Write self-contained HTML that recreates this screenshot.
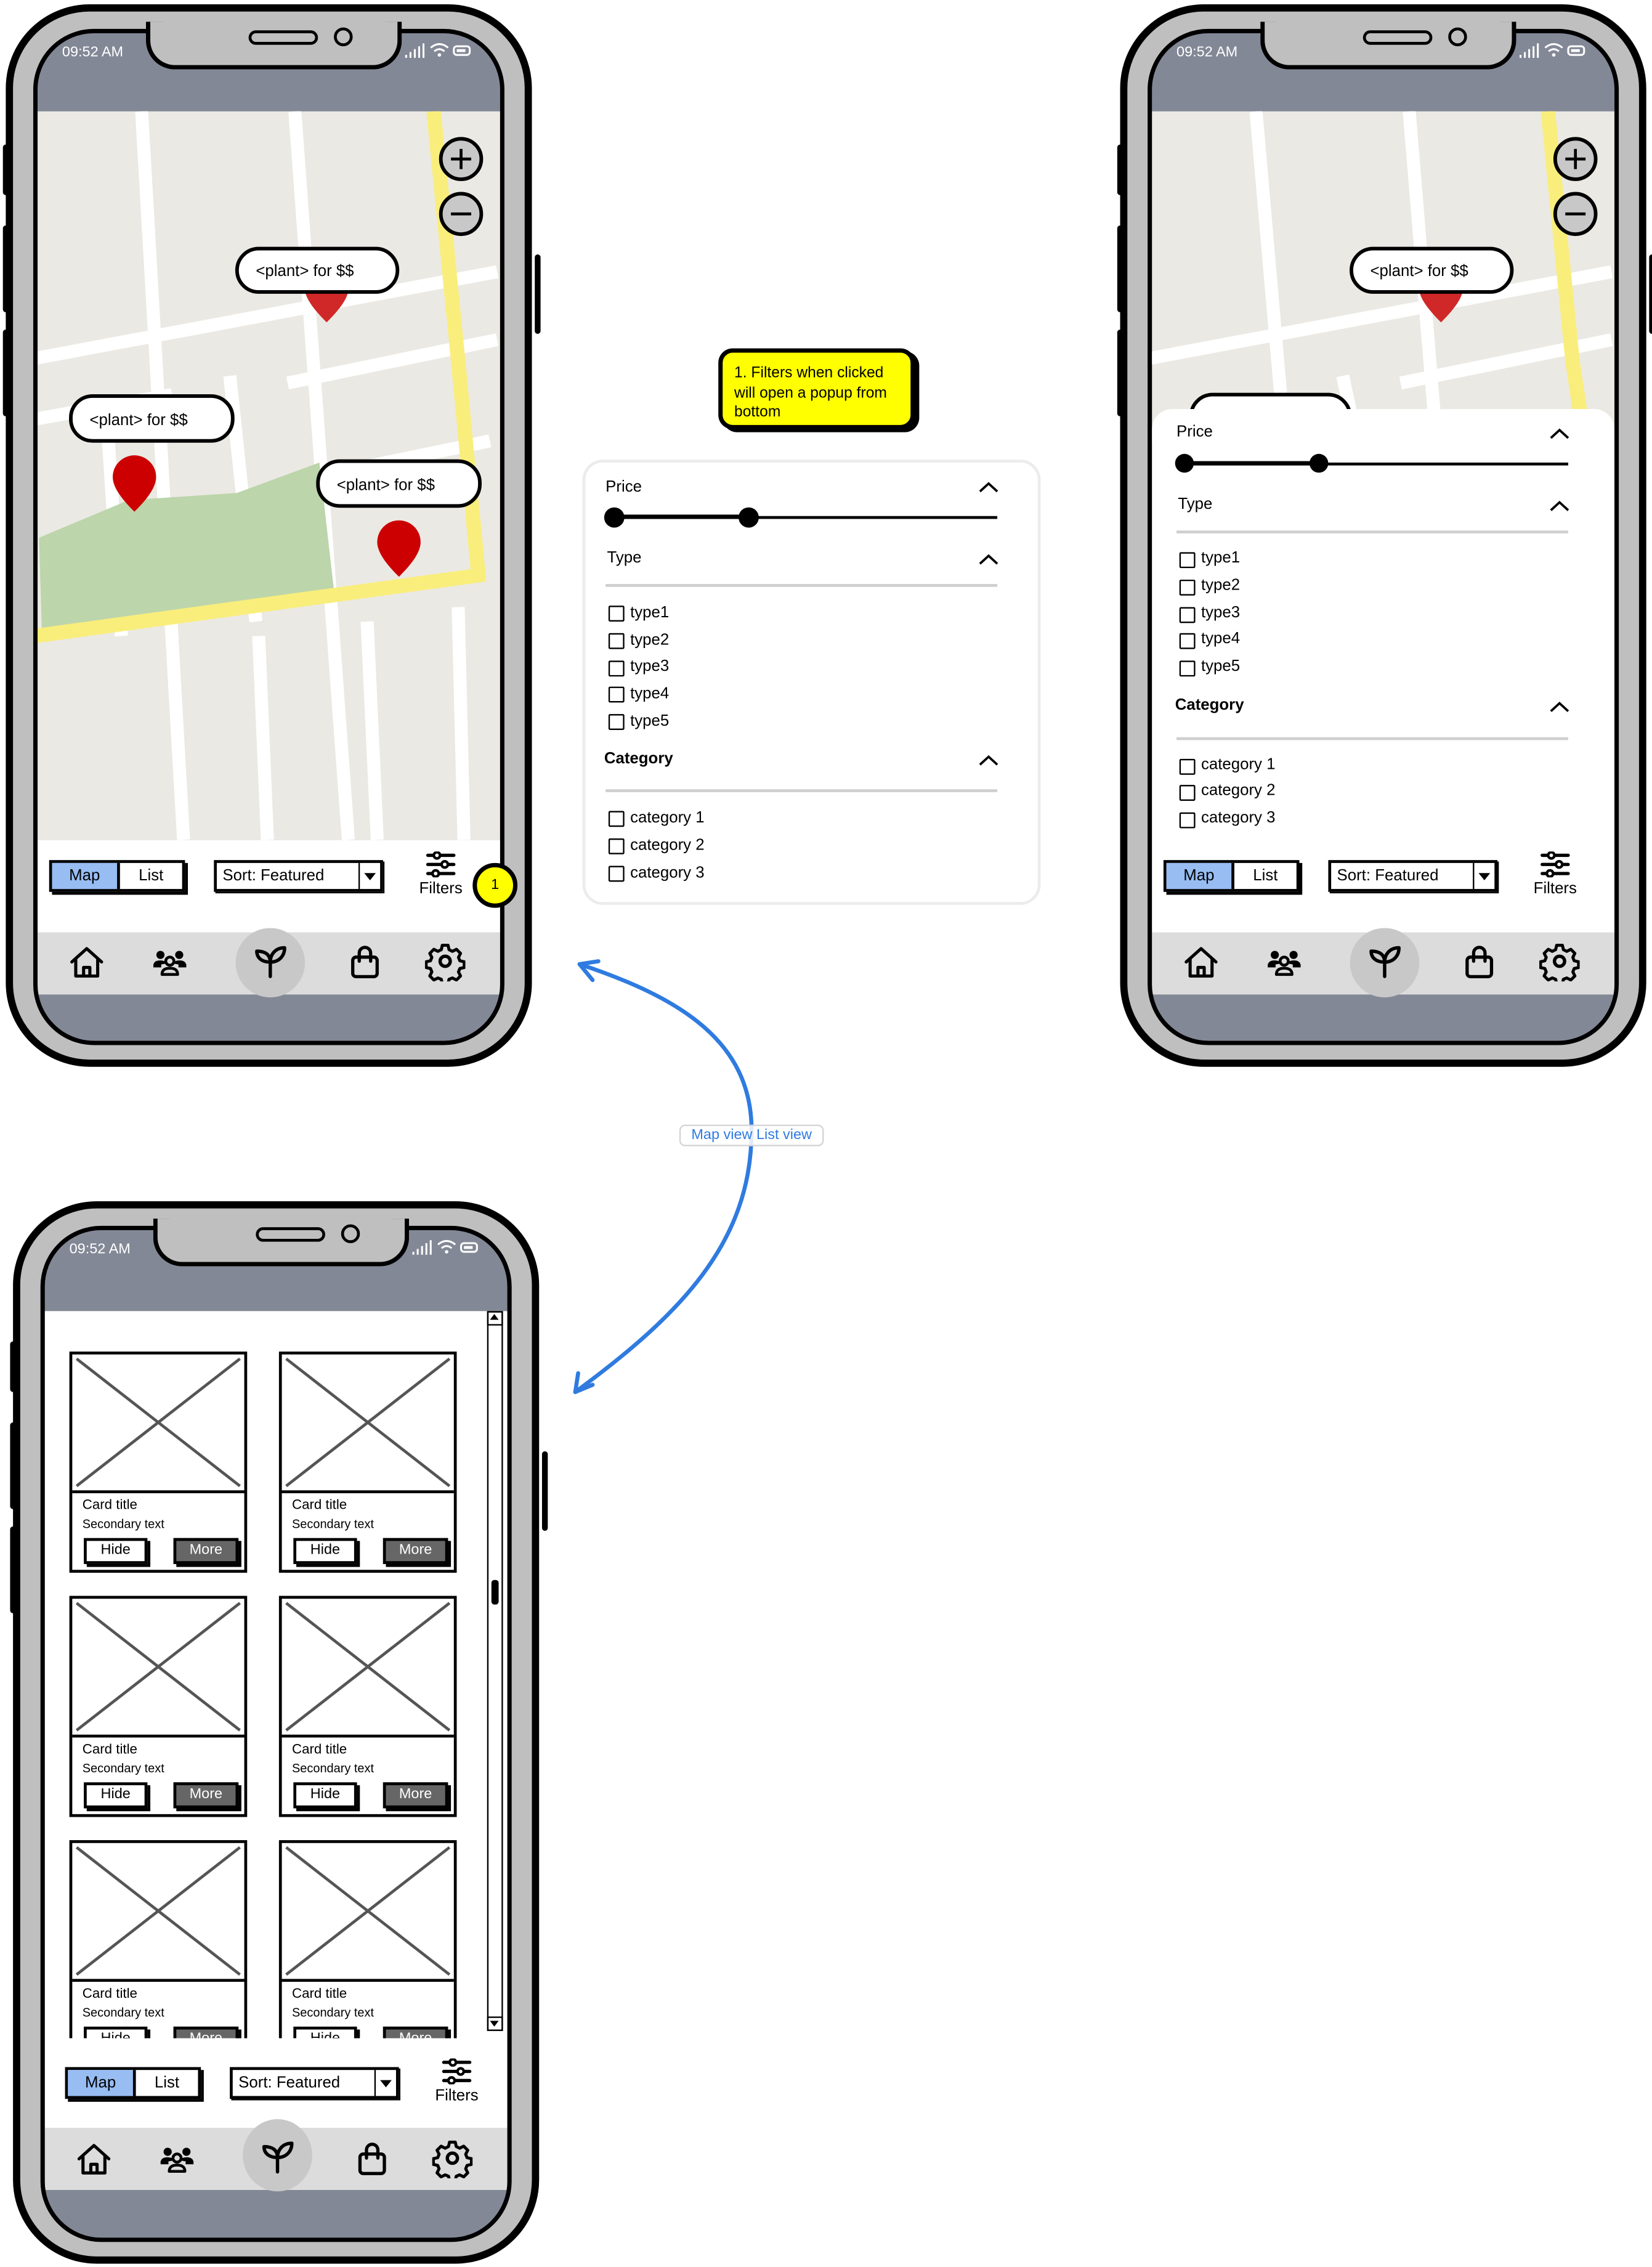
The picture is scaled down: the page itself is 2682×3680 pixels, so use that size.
<!DOCTYPE html>
<html><head><meta charset="utf-8">
<style>
html,body{margin:0;padding:0;background:#fff;}
body{width:2682px;height:3680px;overflow:hidden;position:relative;font-family:"Liberation Sans",sans-serif;}
#w{position:absolute;left:0;top:0;width:1143px;height:1568px;transform:scale(2.3465);transform-origin:0 0;}
.abs{position:absolute;}
.phone{position:absolute;width:364px;height:735px;border:5px solid #000;border-radius:58px;background:#bfbfbf;box-sizing:border-box;}
.screen{position:absolute;left:14px;top:12px;width:326px;height:703px;border:3px solid #000;border-radius:42px;background:#838896;overflow:hidden;box-sizing:border-box;}
.notch{position:absolute;left:92px;top:7px;width:177px;height:33px;background:#bfbfbf;border:3px solid #000;border-top:none;border-radius:0 0 20px 20px;box-sizing:border-box;}
.spk{position:absolute;left:68px;top:6px;width:44px;height:6px;border:2.5px solid #000;border-radius:5px;background:#bfbfbf;}
.cam{position:absolute;left:127px;top:4px;width:9px;height:9px;border:2.5px solid #000;border-radius:50%;}
.sideb{position:absolute;width:4px;background:#000;border-radius:2px;}
.time{position:absolute;left:17px;top:8px;color:#fff;font-size:10px;}
.st{position:absolute;left:253px;top:6px;}
.white{position:absolute;left:0;width:320px;background:#fff;}
.nav{position:absolute;left:0;width:320px;height:43px;background:#dcdcdc;}
.seg{position:absolute;width:90px;height:18px;border:2px solid #000;box-shadow:2px 2px 0 #000;background:#fff;font-size:11px;}
.seg .m{position:absolute;left:0;top:0;width:45px;height:18px;background:#97bdf3;border-right:2px solid #000;text-align:center;line-height:18px;}
.seg .l{position:absolute;left:47px;top:0;width:43px;height:18px;text-align:center;line-height:18px;}
.sort{position:absolute;width:113px;height:18px;border:2px solid #000;box-shadow:1px 1px 0 #000;background:#fff;font-size:11px;line-height:18px;}
.sort span{position:absolute;left:4px;}
.sort .dd{position:absolute;right:0;top:0;width:14px;height:18px;border-left:1.5px solid #000;}
.sort .dd:after{content:"";position:absolute;left:3px;top:7px;border-left:4px solid transparent;border-right:4px solid transparent;border-top:5px solid #000;}
.filt{position:absolute;width:40px;text-align:center;font-size:11px;}
.lbl{position:absolute;font-size:11px;color:#000;}
.cb{position:absolute;width:9px;height:9px;border:1.5px solid #000;border-radius:1px;}
.hr{position:absolute;height:2px;background:#cfcfcf;}
.card{position:absolute;width:123px;height:153px;border:2px solid #000;box-sizing:border-box;background:#fff;}
.card .img{position:absolute;left:0;top:0;width:119px;height:94px;border-bottom:2px solid #000;}
.card .t{position:absolute;left:7px;top:99px;font-size:9.5px;}
.card .s{position:absolute;left:7px;top:112px;font-size:8.5px;}
.card .h{position:absolute;left:8px;top:127px;width:40px;height:14px;border:2px solid #000;box-shadow:2px 2px 0 #000;background:#fff;font-size:10px;text-align:center;line-height:14px;}
.card .mo{position:absolute;left:70px;top:127px;width:41px;height:14px;border:2px solid #000;box-shadow:2px 2px 0 #000;background:#666;color:#fff;font-size:10px;text-align:center;line-height:14px;}
</style></head>
<body><div id="w">
<svg width="0" height="0" style="position:absolute">
<defs>
<symbol id="i-home" viewBox="0 0 24 24"><path d="M2.5 11.5 L12 3 L21.5 11.5 M5 9.5 V20.5 H19 V9.5 M10 20.5 V15 H14 V20.5" fill="none" stroke="#000" stroke-width="2" stroke-linejoin="round" stroke-linecap="round"/></symbol>
<symbol id="i-ppl" viewBox="0 0 24 24"><circle cx="6" cy="7" r="2.6"/><circle cx="18" cy="7" r="2.6"/><path d="M1.5 14 q0-3.5 4.5-3.5 q3 0 4 2 M22.5 14 q0-3.5 -4.5-3.5 q-3 0 -4 2 Z"/><path d="M1.5 14 h5 M17.5 14 h5" stroke="#000" stroke-width="2"/><circle cx="12" cy="11" r="2.6" fill="none" stroke="#000" stroke-width="1.8"/><path d="M7 19.5 q0-4 5-4 q5 0 5 4 Z" fill="none" stroke="#000" stroke-width="1.8" stroke-linejoin="round"/></symbol>
<symbol id="i-sprout" viewBox="0 0 24 24"><path d="M12 21 V12.5 M12 12.5 C12 8 9 6 4 6 C4 10 7 12.5 12 12.5 M12 12.5 C12 8 15 4 20.5 4 C20.5 9 17 12.5 12 12.5" fill="none" stroke="#000" stroke-width="2" stroke-linejoin="round" stroke-linecap="round"/></symbol>
<symbol id="i-bag" viewBox="0 0 24 24"><rect x="4.5" y="9" width="15" height="12" rx="2" fill="none" stroke="#000" stroke-width="2"/><path d="M8.5 11.5 V6.5 a3.5 3.5 0 0 1 7 0 V11.5" fill="none" stroke="#000" stroke-width="2" stroke-linecap="round"/></symbol>
<symbol id="i-gear" viewBox="0 0 24 24"><path d="M10.3 2.5 h3.4 l0.6 2.6 l2 1 l2.4-1.2 l2.4 2.4 l-1.2 2.4 l0.8 2 l2.6 0.6 v3.4 l-2.6 0.6 l-0.8 2 l1.2 2.4 l-2.4 2.4 l-2.4-1.2 l-2 0.8 l-0.6 2.6 h-3.4 l-0.6-2.6 l-2-0.8 l-2.4 1.2 l-2.4-2.4 l1.2-2.4 l-0.8-2 l-2.6-0.6 v-3.4 l2.6-0.6 l0.8-2 l-1.2-2.4 l2.4-2.4 l2.4 1.2 l2-1 Z" fill="none" stroke="#000" stroke-width="1.8" stroke-linejoin="round"/><circle cx="12" cy="12" r="3" fill="none" stroke="#000" stroke-width="2"/></symbol>
<symbol id="i-filt" viewBox="0 0 24 20"><path d="M2 3 H22 M2 10 H22 M2 17 H22" stroke="#000" stroke-width="2.5" stroke-linecap="round"/><circle cx="9" cy="3" r="2.4" fill="#fff" stroke="#000" stroke-width="2"/><circle cx="15" cy="10" r="2.4" fill="#fff" stroke="#000" stroke-width="2"/><circle cx="8" cy="17" r="2.4" fill="#fff" stroke="#000" stroke-width="2"/></symbol>
<symbol id="i-stat" viewBox="0 0 50 12"><path d="M2 11 V9 M5 11 V7 M8 11 V5 M11 11 V3 M14 11 V1" stroke="#fff" stroke-width="1.3"/><path d="M19 4 q6-5 12 0 M21.5 6.5 q3.5-3 7 0" fill="none" stroke="#fff" stroke-width="1.3"/><circle cx="25" cy="9" r="1.2" fill="#fff"/><rect x="35" y="3" width="11" height="6" rx="2" fill="none" stroke="#fff" stroke-width="1.3"/><rect x="37" y="5" width="6" height="2" fill="#fff"/></symbol>
<symbol id="i-chev" viewBox="0 0 14 8"><path d="M1 7 L7 1.5 L13 7" fill="none" stroke="#000" stroke-width="1.6"/></symbol>
</defs></svg>

<!-- ================= PHONE 1 ================= -->
<div class="phone" style="left:4px;top:3px;">
 <div class="screen">
  <div class="time">09:52 AM</div>
  <svg class="st" width="50" height="12"><use href="#i-stat"/></svg>
  <svg class="abs" style="left:0;top:54px" width="320" height="504" viewBox="27 77 320 504">
   <rect x="27" y="77" width="320" height="504" fill="#ebe9e3"/>
   <g stroke="#fff" stroke-width="9" fill="none">
    <path d="M99 77 L128 581"/>
    <path d="M205 77 L242 581"/>
    <path d="M25 248 L345 188"/>
    <path d="M160 260 L178 430"/>
    <path d="M75 290 L85 440"/>
    <path d="M200 265 L345 235"/>
    <path d="M220 330 L340 305"/>
    <path d="M180 440 L186 581 M255 430 L262 581 M318 420 L322 581"/>
    <path d="M25 290 L120 273"/>
   </g>
   <polygon points="28,372 90,346 165,341 222,320 232,408 30,437" fill="#bcd5ab"/>
   <path d="M301 77 L318 250 L332 398 L25 440" fill="none" stroke="#f9ee7c" stroke-width="10"/>
   <path d="M212 200 h30 c0 7 -8 16 -15 23 c-7 -7 -15 -16 -15 -23 z" fill="#d02828"/>
   <path d="M79 330 a15 15 0 1 1 30 0 c0 8 -8 17 -15 24 c-7 -7 -15 -16 -15 -24 z" fill="#cc0000"/>
   <path d="M262 375 a15 15 0 1 1 30 0 c0 8 -8 17 -15 24 c-7 -7 -15 -16 -15 -24 z" fill="#cc0000"/>
   <g fill="#fff" stroke="#000" stroke-width="2.5">
    <rect x="165" y="172" width="111" height="30" rx="15"/>
    <rect x="50" y="274" width="112" height="31" rx="15"/>
    <rect x="221" y="319" width="112" height="31" rx="15"/>
    <circle cx="320" cy="110" r="14" fill="#c8c8c8"/>
    <circle cx="320" cy="148" r="14" fill="#c8c8c8"/>
   </g>
   <path d="M313 110 h14 M320 103 v14 M313 148 h14" stroke="#000" stroke-width="2"/>
   <g font-family="Liberation Sans, sans-serif" font-size="11" fill="#000">
    <text x="178" y="191">&lt;plant&gt; for $$</text>
    <text x="63" y="294">&lt;plant&gt; for $$</text>
    <text x="234" y="339">&lt;plant&gt; for $$</text>
   </g>
  </svg>
  <div class="white" style="top:558px;height:64px;"></div>
  <div class="nav" style="top:622px;"></div>
  <div class="seg" style="left:8px;top:572px;"><div class="m">Map</div><div class="l">List</div></div>
  <div class="sort" style="left:122px;top:572px;"><span>Sort: Featured</span><div class="dd"></div></div>
  <svg class="abs" style="left:268px;top:566px" width="22" height="18"><use href="#i-filt"/></svg>
  <div class="filt" style="left:259px;top:586px;">Filters</div>
  <div class="abs" style="left:137px;top:619px;width:48px;height:48px;border-radius:50%;background:#c8c8c8;"></div>
  <svg class="abs" style="left:21px;top:630px" width="26" height="26"><use href="#i-home"/></svg>
  <svg class="abs" style="left:78px;top:630px" width="27" height="26"><use href="#i-ppl"/></svg>
  <svg class="abs" style="left:147px;top:628px" width="28" height="28"><use href="#i-sprout"/></svg>
  <svg class="abs" style="left:213px;top:629px" width="27" height="27"><use href="#i-bag"/></svg>
  <svg class="abs" style="left:268px;top:628px" width="28" height="28"><use href="#i-gear"/></svg>
 </div>
 <div class="notch"><div class="spk"></div><div class="cam"></div></div>
 <div class="sideb" style="left:-7px;top:92px;height:35px"></div>
 <div class="sideb" style="left:-7px;top:148px;height:60px"></div>
 <div class="sideb" style="left:-7px;top:220px;height:60px"></div>
 <div class="sideb" style="left:361px;top:168px;height:55px"></div>
 <div class="abs" style="left:318px;top:589px;width:25px;height:25px;border-radius:50%;background:#ffff00;border:3px solid #000;font-size:10px;text-align:center;line-height:25px;">1</div>
</div>

<!-- ================= PHONE 2 ================= -->
<div class="phone" style="left:775px;top:3px;">
 <div class="screen">
  <div class="time">09:52 AM</div>
  <svg class="st" width="50" height="12"><use href="#i-stat"/></svg>
  <svg class="abs" style="left:0;top:54px" width="320" height="230" viewBox="798 77 320 230">
   <rect x="798" y="77" width="320" height="230" fill="#ebe9e3"/>
   <g stroke="#fff" stroke-width="9" fill="none">
    <path d="M870 77 L890 307"/>
    <path d="M976 77 L995 307"/>
    <path d="M796 248 L1116 188"/>
    <path d="M930 260 L940 307"/>
    <path d="M970 265 L1116 235"/>
   </g>
   <path d="M1072 77 L1089 250 L1095 290" fill="none" stroke="#f9ee7c" stroke-width="10"/>
   <path d="M983 200 h30 c0 7 -8 16 -15 23 c-7 -7 -15 -16 -15 -23 z" fill="#d02828"/>
   <g fill="#fff" stroke="#000" stroke-width="2.5">
    <rect x="936" y="172" width="111" height="30" rx="15"/>
    <rect x="825" y="273" width="110" height="31" rx="15"/>
    <circle cx="1091" cy="110" r="14" fill="#c8c8c8"/>
    <circle cx="1091" cy="148" r="14" fill="#c8c8c8"/>
   </g>
   <path d="M1084 110 h14 M1091 103 v14 M1084 148 h14" stroke="#000" stroke-width="2"/>
   <text x="949" y="191" font-family="Liberation Sans, sans-serif" font-size="11">&lt;plant&gt; for $$</text>
  </svg>
  <div class="white" style="top:260px;height:362px;border-radius:14px 14px 0 0;"></div>
  <div class="lbl" style="left:17px;top:270px;">Price</div>
  <svg class="abs" style="left:275px;top:273px" width="14" height="8"><use href="#i-chev"/></svg>
  <div class="abs" style="left:23px;top:297px;width:265px;height:2px;background:#000;"></div>
  <div class="abs" style="left:23px;top:296px;width:93px;height:3px;background:#000;"></div>
  <div class="abs" style="left:16px;top:291px;width:13px;height:13px;border-radius:50%;background:#000;"></div>
  <div class="abs" style="left:109px;top:291px;width:13px;height:13px;border-radius:50%;background:#000;"></div>
  <div class="lbl" style="left:18px;top:320px;">Type</div>
  <svg class="abs" style="left:275px;top:323px" width="14" height="8"><use href="#i-chev"/></svg>
  <div class="hr" style="left:17px;top:344px;width:271px;"></div>
  <div class="cb" style="left:19px;top:359px"></div><div class="lbl" style="left:34px;top:357px;">type1</div>
  <div class="cb" style="left:19px;top:378px"></div><div class="lbl" style="left:34px;top:376px;">type2</div>
  <div class="cb" style="left:19px;top:397px"></div><div class="lbl" style="left:34px;top:395px;">type3</div>
  <div class="cb" style="left:19px;top:415px"></div><div class="lbl" style="left:34px;top:413px;">type4</div>
  <div class="cb" style="left:19px;top:434px"></div><div class="lbl" style="left:34px;top:432px;">type5</div>
  <div class="lbl" style="left:16px;top:459px;font-weight:bold;">Category</div>
  <svg class="abs" style="left:275px;top:462px" width="14" height="8"><use href="#i-chev"/></svg>
  <div class="hr" style="left:17px;top:487px;width:271px;"></div>
  <div class="cb" style="left:19px;top:502px"></div><div class="lbl" style="left:34px;top:500px;">category 1</div>
  <div class="cb" style="left:19px;top:520px"></div><div class="lbl" style="left:34px;top:518px;">category 2</div>
  <div class="cb" style="left:19px;top:539px"></div><div class="lbl" style="left:34px;top:537px;">category 3</div>
  <div class="nav" style="top:622px;"></div>
  <div class="seg" style="left:8px;top:572px;"><div class="m">Map</div><div class="l">List</div></div>
  <div class="sort" style="left:122px;top:572px;"><span>Sort: Featured</span><div class="dd"></div></div>
  <svg class="abs" style="left:268px;top:566px" width="22" height="18"><use href="#i-filt"/></svg>
  <div class="filt" style="left:259px;top:586px;">Filters</div>
  <div class="abs" style="left:137px;top:619px;width:48px;height:48px;border-radius:50%;background:#c8c8c8;"></div>
  <svg class="abs" style="left:21px;top:630px" width="26" height="26"><use href="#i-home"/></svg>
  <svg class="abs" style="left:78px;top:630px" width="27" height="26"><use href="#i-ppl"/></svg>
  <svg class="abs" style="left:147px;top:628px" width="28" height="28"><use href="#i-sprout"/></svg>
  <svg class="abs" style="left:213px;top:629px" width="27" height="27"><use href="#i-bag"/></svg>
  <svg class="abs" style="left:268px;top:628px" width="28" height="28"><use href="#i-gear"/></svg>
 </div>
 <div class="notch"><div class="spk"></div><div class="cam"></div></div>
 <div class="sideb" style="left:-7px;top:92px;height:35px"></div>
 <div class="sideb" style="left:-7px;top:148px;height:60px"></div>
 <div class="sideb" style="left:-7px;top:220px;height:60px"></div>
 <div class="sideb" style="left:361px;top:168px;height:55px"></div>
</div>

<!-- ================= MIDDLE ================= -->
<div class="abs" style="left:497px;top:241px;width:136px;height:56px;background:#ffff00;border:3px solid #000;border-radius:10px;box-shadow:3px 2px 0 #000;box-sizing:border-box;font-size:10.5px;line-height:13.5px;padding:8px 14px 0 8px;">1. Filters when clicked will open a popup from bottom</div>

<div class="abs" style="left:403px;top:318px;width:317px;height:308px;border:2px solid #ececec;border-radius:14px;box-sizing:border-box;background:#fff;"></div>
<div class="lbl" style="left:419px;top:331px;">Price</div>
<svg class="abs" style="left:677px;top:333px" width="14" height="8"><use href="#i-chev"/></svg>
<div class="abs" style="left:425px;top:357px;width:265px;height:2px;background:#000;"></div>
<div class="abs" style="left:425px;top:356px;width:93px;height:3px;background:#000;"></div>
<div class="abs" style="left:418px;top:351px;width:14px;height:14px;border-radius:50%;background:#000;"></div>
<div class="abs" style="left:511px;top:351px;width:14px;height:14px;border-radius:50%;background:#000;"></div>
<div class="lbl" style="left:420px;top:380px;">Type</div>
<svg class="abs" style="left:677px;top:383px" width="14" height="8"><use href="#i-chev"/></svg>
<div class="hr" style="left:419px;top:404px;width:271px;"></div>
<div class="cb" style="left:421px;top:419px"></div><div class="lbl" style="left:436px;top:418px;">type1</div>
<div class="cb" style="left:421px;top:438px"></div><div class="lbl" style="left:436px;top:437px;">type2</div>
<div class="cb" style="left:421px;top:457px"></div><div class="lbl" style="left:436px;top:455px;">type3</div>
<div class="cb" style="left:421px;top:475px"></div><div class="lbl" style="left:436px;top:474px;">type4</div>
<div class="cb" style="left:421px;top:494px"></div><div class="lbl" style="left:436px;top:493px;">type5</div>
<div class="lbl" style="left:418px;top:519px;font-weight:bold;">Category</div>
<svg class="abs" style="left:677px;top:522px" width="14" height="8"><use href="#i-chev"/></svg>
<div class="hr" style="left:419px;top:546px;width:271px;"></div>
<div class="cb" style="left:421px;top:561px"></div><div class="lbl" style="left:436px;top:560px;">category 1</div>
<div class="cb" style="left:421px;top:580px"></div><div class="lbl" style="left:436px;top:579px;">category 2</div>
<div class="cb" style="left:421px;top:599px"></div><div class="lbl" style="left:436px;top:598px;">category 3</div>

<svg class="abs" style="left:0;top:0" width="1143" height="1568">
 <g fill="none" stroke="#2f7be0" stroke-width="2.8" stroke-linecap="round">
  <path d="M401 667 C470 690 520 720 520 782 C520 860 470 910 398 963"/>
  <path d="M401 667 L410 678 M401 667 L414 665"/>
  <path d="M398 963 L400 950 M398 963 L410 958"/>
 </g>
</svg>
<div class="abs" style="left:470px;top:778px;width:100px;height:15px;border:1.5px solid #d4d4d4;border-radius:4px;background:rgba(255,255,255,0.85);box-sizing:border-box;font-size:10px;color:#2f7be0;text-align:center;line-height:13px;">Map view List view</div>

<!-- ================= PHONE 3 ================= -->
<div class="phone" style="left:9px;top:831px;">
 <div class="screen">
  <div class="time">09:52 AM</div>
  <svg class="st" width="50" height="12"><use href="#i-stat"/></svg>
  <div class="white" style="top:56px;height:566px;"></div>
  <div class="abs" style="left:0;top:56px;width:320px;height:503px;overflow:hidden;">
   <div class="card" style="left:17px;top:28px"><svg class="img" viewBox="0 0 119 94" preserveAspectRatio="none"><path d="M3 3 L116 91 M116 3 L3 91" stroke="#555" stroke-width="2"/></svg><div class="t">Card title</div><div class="s">Secondary text</div><div class="h">Hide</div><div class="mo">More</div></div>
   <div class="card" style="left:162px;top:28px"><svg class="img" viewBox="0 0 119 94" preserveAspectRatio="none"><path d="M3 3 L116 91 M116 3 L3 91" stroke="#555" stroke-width="2"/></svg><div class="t">Card title</div><div class="s">Secondary text</div><div class="h">Hide</div><div class="mo">More</div></div>
   <div class="card" style="left:17px;top:197px"><svg class="img" viewBox="0 0 119 94" preserveAspectRatio="none"><path d="M3 3 L116 91 M116 3 L3 91" stroke="#555" stroke-width="2"/></svg><div class="t">Card title</div><div class="s">Secondary text</div><div class="h">Hide</div><div class="mo">More</div></div>
   <div class="card" style="left:162px;top:197px"><svg class="img" viewBox="0 0 119 94" preserveAspectRatio="none"><path d="M3 3 L116 91 M116 3 L3 91" stroke="#555" stroke-width="2"/></svg><div class="t">Card title</div><div class="s">Secondary text</div><div class="h">Hide</div><div class="mo">More</div></div>
   <div class="card" style="left:17px;top:366px"><svg class="img" viewBox="0 0 119 94" preserveAspectRatio="none"><path d="M3 3 L116 91 M116 3 L3 91" stroke="#555" stroke-width="2"/></svg><div class="t">Card title</div><div class="s">Secondary text</div><div class="h">Hide</div><div class="mo">More</div></div>
   <div class="card" style="left:162px;top:366px"><svg class="img" viewBox="0 0 119 94" preserveAspectRatio="none"><path d="M3 3 L116 91 M116 3 L3 91" stroke="#555" stroke-width="2"/></svg><div class="t">Card title</div><div class="s">Secondary text</div><div class="h">Hide</div><div class="mo">More</div></div>
  </div>
  <div class="abs" style="left:306px;top:56px;width:9px;height:496px;border:1.5px solid #000;background:#fff;"></div>
  <div class="abs" style="left:306px;top:56px;width:9px;height:8px;border:1.5px solid #000;"></div>
  <div class="abs" style="left:308px;top:58px;border-left:3.5px solid transparent;border-right:3.5px solid transparent;border-bottom:4px solid #000;"></div>
  <div class="abs" style="left:306px;top:544px;width:9px;height:8px;border:1.5px solid #000;"></div>
  <div class="abs" style="left:308px;top:547px;border-left:3.5px solid transparent;border-right:3.5px solid transparent;border-top:4px solid #000;"></div>
  <div class="abs" style="left:309px;top:242px;width:5px;height:17px;background:#000;border-radius:2px;"></div>
  <div class="nav" style="top:621px;"></div>
  <div class="seg" style="left:14px;top:579px;"><div class="m">Map</div><div class="l">List</div></div>
  <div class="sort" style="left:128px;top:579px;"><span>Sort: Featured</span><div class="dd"></div></div>
  <svg class="abs" style="left:274px;top:573px" width="22" height="18"><use href="#i-filt"/></svg>
  <div class="filt" style="left:265px;top:593px;">Filters</div>
  <div class="abs" style="left:137px;top:615px;width:48px;height:50px;border-radius:50%;background:#c8c8c8;"></div>
  <svg class="abs" style="left:21px;top:630px" width="26" height="26"><use href="#i-home"/></svg>
  <svg class="abs" style="left:78px;top:630px" width="27" height="26"><use href="#i-ppl"/></svg>
  <svg class="abs" style="left:147px;top:627px" width="28" height="28"><use href="#i-sprout"/></svg>
  <svg class="abs" style="left:213px;top:629px" width="27" height="27"><use href="#i-bag"/></svg>
  <svg class="abs" style="left:268px;top:628px" width="28" height="28"><use href="#i-gear"/></svg>
 </div>
 <div class="notch"><div class="spk"></div><div class="cam"></div></div>
 <div class="sideb" style="left:-7px;top:92px;height:35px"></div>
 <div class="sideb" style="left:-7px;top:148px;height:60px"></div>
 <div class="sideb" style="left:-7px;top:220px;height:60px"></div>
 <div class="sideb" style="left:361px;top:168px;height:55px"></div>
</div>

</div></body></html>
